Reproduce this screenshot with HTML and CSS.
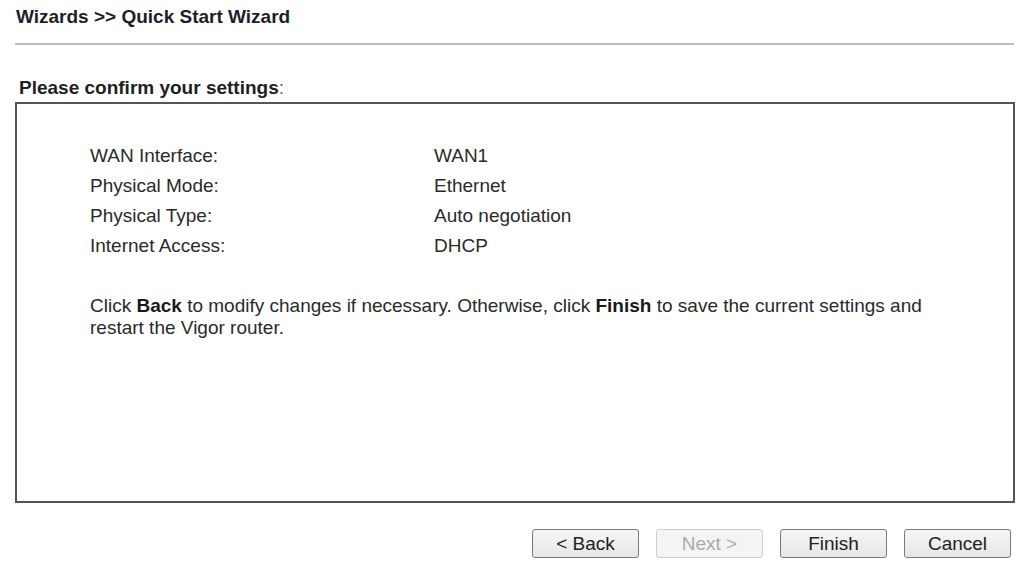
FILE: index.html
```html
<!DOCTYPE html>
<html>
<head>
<meta charset="utf-8">
<link rel="stylesheet" href="styles.css">
</head>
<body>
<div class="page">
  <h1 class="title">Wizards &gt;&gt; Quick Start Wizard</h1>
  <div class="rule"></div>
  <h2 class="heading"><b>Please confirm your settings</b><span class="colon">:</span></h2>
  <div class="box">
    <div class="grid">
      <div>WAN Interface:</div><div>WAN1</div>
      <div>Physical Mode:</div><div>Ethernet</div>
      <div>Physical Type:</div><div>Auto negotiation</div>
      <div>Internet Access:</div><div>DHCP</div>
    </div>
    <p class="note">Click <b>Back</b> to modify changes if necessary. Otherwise, click <b>Finish</b> to save the current settings and restart the Vigor router.</p>
  </div>
  <div class="buttons">
    <button class="btn">&lt; Back</button>
    <button class="btn" disabled>Next &gt;</button>
    <button class="btn">Finish</button>
    <button class="btn">Cancel</button>
  </div>
</div>
</body>
</html>
```
FILE: styles.css
```css
html, body {
  margin: 0;
  padding: 0;
  background: #fff;
}
body {
  font-family: "Liberation Sans", Arial, sans-serif;
  font-size: 19px;
  color: #222;
}
.page {
  width: 1028px;
  height: 566px;
  overflow: hidden;
}
.title {
  margin: 0;
  padding: 6px 0 0 16px;
  font-size: 19px;
  line-height: 22px;
  font-weight: bold;
  color: #1e1e2a;
}
.rule {
  margin: 15px 14px 0 15px;
  height: 2px;
  background: #bdbdbd;
}
.heading {
  margin: 32px 0 0 19px;
  font-size: 19px;
  line-height: 22px;
  font-weight: normal;
  color: #1e1e24;
}
.heading b {
  font-weight: bold;
}
.colon {
  color: #666;
}
.box {
  box-sizing: border-box;
  margin: 3px 0 0 15px;
  width: 1000px;
  height: 401px;
  border: 2px solid #555;
  padding: 37px 0 0 73px;
}
.grid {
  display: grid;
  grid-template-columns: 344px 1fr;
  line-height: 30px;
  color: #2a2a2a;
}
.note {
  margin: 34px 60px 0 0;
  line-height: 22px;
  color: #2a2a2a;
}
.note b {
  color: #1a1a1a;
}
.buttons {
  display: flex;
  justify-content: flex-end;
  gap: 17px;
  margin: 26px 17px 0 0;
}
.btn {
  box-sizing: border-box;
  width: 107px;
  height: 29px;
  padding: 0;
  font-family: "Liberation Sans", Arial, sans-serif;
  font-size: 19px;
  color: #222;
  background: linear-gradient(#f6f6f6, #e6e6e6);
  border: 1px solid #7a7a7a;
  border-radius: 3px;
}
.btn:disabled {
  color: #aaa;
  background: #f4f4f4;
  border-color: #d0d0d0;
}
```
